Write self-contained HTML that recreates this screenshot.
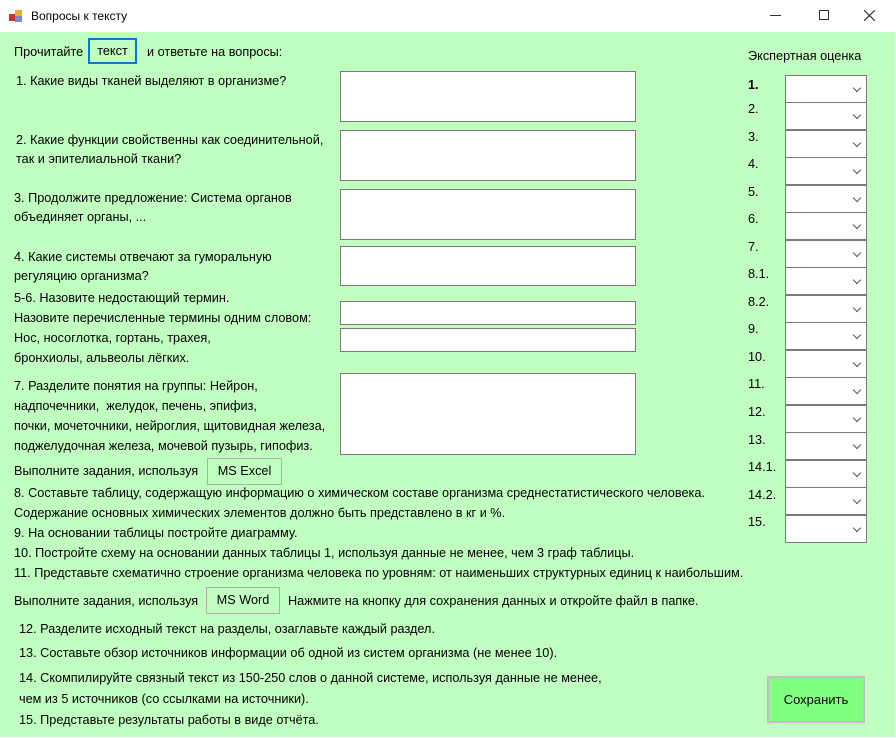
<!DOCTYPE html>
<html><head><meta charset="utf-8"><style>
*{margin:0;padding:0;box-sizing:border-box}
body{width:896px;height:738px;overflow:hidden;background:#fff;font-family:"Liberation Sans",sans-serif;font-size:12.7px;color:#000;position:relative;letter-spacing:0}
#title{position:absolute;left:0;top:0;width:896px;height:32px;background:#fff}
#title .t{position:absolute;left:31px;top:9px;font-size:12px;letter-spacing:0}
#client{position:absolute;left:0;top:32px;width:895px;height:705px;background:#c0ffc0}
.a{position:absolute;white-space:nowrap;line-height:19px}
.tb{position:absolute;left:340px;width:296px;background:#fff;border:1px solid #7a7a7a}
.cb{position:absolute;left:785px;width:82px;height:28px;background:#fff;border:1px solid #7a7a7a}
.cb:after{content:"";position:absolute;right:6px;top:9px;width:5px;height:5px;border-right:1px solid #555;border-bottom:1px solid #555;transform:rotate(45deg)}
.btn{position:absolute;border:1px solid #adadad;text-align:center;line-height:24px}
.n{position:absolute;left:748px;font-weight:normal}
</style></head><body>
<div id="title">
<svg style="position:absolute;left:9px;top:9px" width="14" height="14"><rect x="0" y="5" width="7" height="7" fill="#c33"/><rect x="6" y="1" width="7" height="6" fill="#e8b020"/><rect x="6" y="7" width="7" height="6" fill="#7a8ac8"/></svg>
<div class="t">Вопросы к тексту</div>
<div style="position:absolute;left:770px;top:15px;width:11px;height:1px;background:#333"></div>
<div style="position:absolute;left:819px;top:10px;width:10px;height:10px;border:1px solid #333"></div>
<svg style="position:absolute;left:864px;top:10px" width="11" height="11"><path d="M0 0L11 11M11 0L0 11" stroke="#333" stroke-width="1.2"/></svg>
</div>
<div id="client"></div>
<div class="a" style="left:14px;top:43px">Прочитайте</div>
<div class="btn" style="left:88px;top:38px;width:49px;height:26px;border:2px solid #0078d7;line-height:22px">текст</div>
<div class="a" style="left:147px;top:43px">и ответьте на вопросы:</div>
<div class="a" style="left:16px;top:72px">1. Какие виды тканей выделяют в организме?</div>
<div class="tb" style="top:71px;height:51px"></div>
<div class="a" style="left:16px;top:131px">2. Какие функции свойственны как соединительной,<br>так и эпителиальной ткани?</div>
<div class="tb" style="top:130px;height:51px"></div>
<div class="a" style="left:14px;top:189px">3. Продолжите предложение: Система органов<br>объединяет органы, ...</div>
<div class="tb" style="top:189px;height:51px"></div>
<div class="a" style="left:14px;top:248px">4. Какие системы отвечают за гуморальную<br>регуляцию организма?</div>
<div class="tb" style="top:246px;height:40px"></div>
<div class="a" style="left:14px;top:288px;line-height:20px">5-6. Назовите недостающий термин.<br>Назовите перечисленные термины одним словом:<br>Нос, носоглотка, гортань, трахея,<br>бронхиолы, альвеолы лёгких.</div>
<div class="tb" style="top:301px;height:24px"></div>
<div class="tb" style="top:328px;height:24px"></div>
<div class="a" style="left:14px;top:376px;line-height:20px">7. Разделите понятия на группы: Нейрон,<br>надпочечники,&nbsp; желудок, печень, эпифиз,<br>почки, мочеточники, нейроглия, щитовидная железа,<br>поджелудочная железа, мочевой пузырь, гипофиз.</div>
<div class="tb" style="top:373px;height:82px"></div>
<div class="a" style="left:14px;top:462px">Выполните задания, используя</div>
<div class="btn" style="left:207px;top:458px;width:75px;height:27px">MS Excel</div>
<div class="a" style="left:14px;top:483px;line-height:20px">8. Составьте таблицу, содержащую информацию о химическом составе организма среднестатистического человека.<br>Содержание основных химических элементов должно быть представлено в кг и %.<br>9. На основании таблицы постройте диаграмму.<br>10. Постройте схему на основании данных таблицы 1, используя данные не менее, чем 3 граф таблицы.<br>11. Представьте схематично строение организма человека по уровням: от наименьших структурных единиц к наибольшим.</div>
<div class="a" style="left:14px;top:592px">Выполните задания, используя</div>
<div class="btn" style="left:206px;top:587px;width:74px;height:27px">MS Word</div>
<div class="a" style="left:288px;top:592px">Нажмите на кнопку для сохранения данных и откройте файл в папке.</div>
<div class="a" style="left:19px;top:620px">12. Разделите исходный текст на разделы, озаглавьте каждый раздел.</div>
<div class="a" style="left:19px;top:644px">13. Составьте обзор источников информации об одной из систем организма (не менее 10).</div>
<div class="a" style="left:19px;top:668px;line-height:21px">14. Скомпилируйте связный текст из 150-250 слов о данной системе, используя данные не менее,<br>чем из 5 источников (со ссылками на источники).<br>15. Представьте результаты работы в виде отчёта.</div>
<div class="a" style="left:748px;top:47px">Экспертная оценка</div>
<div class="n a" style="top:76px;font-weight:bold">1.</div>
<div class="n a" style="top:100px">2.</div>
<div class="n a" style="top:128px">3.</div>
<div class="n a" style="top:155px">4.</div>
<div class="n a" style="top:183px">5.</div>
<div class="n a" style="top:210px">6.</div>
<div class="n a" style="top:238px">7.</div>
<div class="n a" style="top:265px">8.1.</div>
<div class="n a" style="top:293px">8.2.</div>
<div class="n a" style="top:320px">9.</div>
<div class="n a" style="top:348px">10.</div>
<div class="n a" style="top:375px">11.</div>
<div class="n a" style="top:403px">12.</div>
<div class="n a" style="top:431px">13.</div>
<div class="n a" style="top:458px">14.1.</div>
<div class="n a" style="top:486px">14.2.</div>
<div class="n a" style="top:513px">15.</div>
<div class="cb" style="top:75px"></div>
<div class="cb" style="top:102px"></div>
<div class="cb" style="top:130px"></div>
<div class="cb" style="top:157px"></div>
<div class="cb" style="top:185px"></div>
<div class="cb" style="top:212px"></div>
<div class="cb" style="top:240px"></div>
<div class="cb" style="top:267px"></div>
<div class="cb" style="top:295px"></div>
<div class="cb" style="top:322px"></div>
<div class="cb" style="top:350px"></div>
<div class="cb" style="top:377px"></div>
<div class="cb" style="top:405px"></div>
<div class="cb" style="top:432px"></div>
<div class="cb" style="top:460px"></div>
<div class="cb" style="top:487px"></div>
<div class="cb" style="top:515px"></div>
<div style="position:absolute;left:767px;top:676px;width:98px;height:47px;border:2px solid #c0c0c0;background:#80ff80;text-align:center;line-height:43px;font-size:13px">Сохранить</div>
</body></html>
